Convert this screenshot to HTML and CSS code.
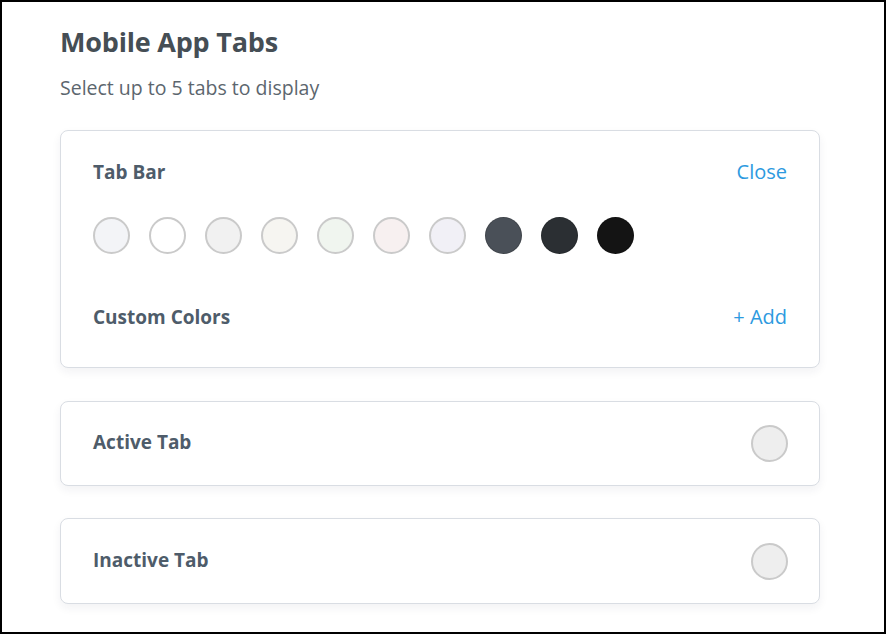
FILE: index.html
```html
<!DOCTYPE html>
<html>
<head>
<meta charset="utf-8">
<link rel="stylesheet" href="styles.css">
</head>
<body>
<div class="page">
  <h1 class="title">Mobile App Tabs</h1>
  <p class="subtitle">Select up to 5 tabs to display</p>

  <section class="card card-open">
    <div class="row">
      <span class="label">Tab Bar</span>
      <a class="link">Close</a>
    </div>
    <div class="swatches">
      <span class="swatch light" style="background:#f3f4f7"></span>
      <span class="swatch light" style="background:#ffffff"></span>
      <span class="swatch light" style="background:#f1f1f1"></span>
      <span class="swatch light" style="background:#f6f5f1"></span>
      <span class="swatch light" style="background:#f0f5ef"></span>
      <span class="swatch light" style="background:#f7f0f0"></span>
      <span class="swatch light" style="background:#f1f0f6"></span>
      <span class="swatch dark" style="background:#4a5058"></span>
      <span class="swatch dark" style="background:#2b2f33"></span>
      <span class="swatch dark" style="background:#141414"></span>
    </div>
    <div class="row row-custom">
      <span class="label">Custom Colors</span>
      <a class="link">+ Add</a>
    </div>
  </section>

  <section class="card card-row">
    <span class="label">Active Tab</span>
    <span class="swatch light pick"></span>
  </section>

  <section class="card card-row card-last">
    <span class="label">Inactive Tab</span>
    <span class="swatch light pick"></span>
  </section>
</div>
</body>
</html>
```

FILE: styles.css
```css
* { box-sizing: border-box; }
html, body { margin: 0; padding: 0; }
body {
  width: 886px;
  height: 634px;
  border: 2px solid #000;
  background: #fff;
  font-family: "Open Sans", "Lato", sans-serif;
  overflow: hidden;
}
.page {
  padding: 0 64px 0 58px;
}
.title {
  margin: 0;
  padding-top: 24px;
  font-size: 27px;
  line-height: 32px;
  font-weight: 700;
  color: #454e55;
  letter-spacing: -0.2px;
}
.subtitle {
  margin: 18px 0 0;
  font-size: 19.5px;
  line-height: 24px;
  color: #5c666e;
}
.card {
  background: #fff;
  border: 1px solid #d9dde3;
  border-radius: 8px;
  box-shadow: 0 4px 10px rgba(30, 40, 60, 0.06);
}
.card-open {
  margin-top: 30px;
  padding: 29px 32px 38px;
}
.row {
  display: flex;
  justify-content: space-between;
  align-items: center;
  height: 24px;
}
.label {
  font-size: 19px;
  font-weight: 700;
  color: #4e5c6a;
  line-height: 24px;
}
.link {
  font-size: 20px;
  color: #2d9ae0;
  line-height: 24px;
}
.swatches {
  display: flex;
  gap: 19px;
  margin-top: 33px;
}
.swatch {
  width: 37px;
  height: 37px;
  border-radius: 50%;
  display: block;
  flex: none;
}
.swatch.light { border: 2px solid #cacaca; }
.swatch.dark { border: 1px solid rgba(0,0,0,0.15); }
.row-custom { margin-top: 51px; }
.card-row {
  margin-top: 33px;
  height: 85px;
  padding: 0 31px 0 32px;
  display: flex;
  align-items: center;
  justify-content: space-between;
}
.card-row .label { margin-bottom: 3px; }
.card-last { margin-top: 32px; height: 86px; }
.pick { background: #eeeeee; }
```
